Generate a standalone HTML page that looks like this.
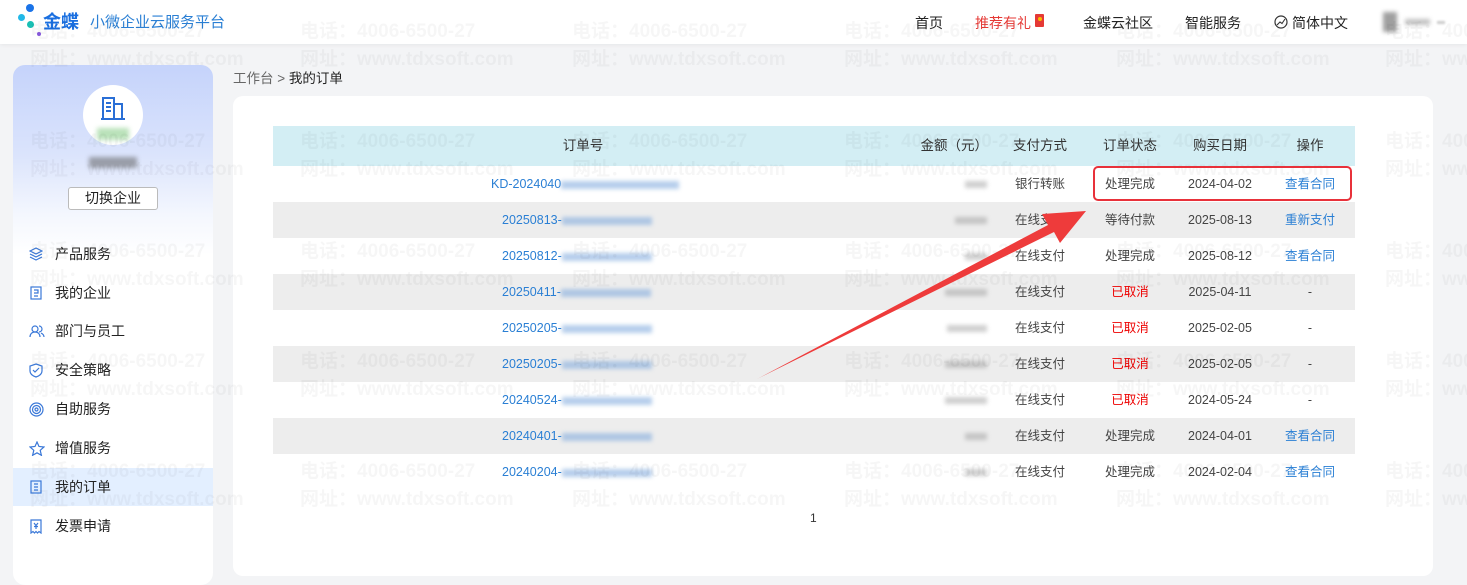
<!DOCTYPE html>
<html><head><meta charset="utf-8">
<style>
*{margin:0;padding:0;box-sizing:border-box}
body{width:1467px;height:566px;overflow:hidden;background:#f3f4f6;font-family:"Liberation Sans","Noto Sans CJK SC",sans-serif;font-size:13px;color:#333;position:relative}
.hdr{position:absolute;left:0;top:0;width:1467px;height:44px;background:#fff;box-shadow:0 1px 4px rgba(0,0,0,.06)}
.abs{position:absolute}
.side{position:absolute;left:13px;top:65px;width:200px;height:520px;border-radius:12px;background:linear-gradient(#c5d3fb 0,#dbe4fc 90px,#f4f7fe 150px,#fff 190px)}
.menu{position:absolute;left:0;width:200px;height:38px;line-height:38px;padding-left:42px;font-size:14px;color:#222}
.menu svg{position:absolute;left:16px;top:12px}
.main{position:absolute;left:233px;top:96px;width:1200px;height:480px;background:#fff;border-radius:10px}
.row{position:absolute;left:273px;width:1082px;height:36px;line-height:36px;font-size:12.5px;color:#444}
.g{background:#ededed}
.c{position:absolute;text-align:center}
.blue{color:#2a7fd4}.red{color:#e00}
.blur{display:inline-block;height:8px;background:#7aa6dc;filter:blur(2px);vertical-align:middle;opacity:.55}
.bg{display:inline-block;height:7px;background:#888;filter:blur(2px);vertical-align:middle;opacity:.4}
.wm{position:absolute;color:rgba(0,0,0,.035);font-weight:bold;font-size:19px;line-height:28px;white-space:nowrap;pointer-events:none;z-index:50}
</style></head><body>
<div class="hdr"></div>
<div class="abs" style="left:26px;top:4px;width:8px;height:8px;border-radius:50%;background:#1a73e8"></div>
<div class="abs" style="left:18px;top:14px;width:7px;height:7px;border-radius:50%;background:#22b8e8"></div>
<div class="abs" style="left:27px;top:21px;width:7px;height:7px;border-radius:50%;background:#19bfb4"></div>
<div class="abs" style="left:37px;top:32px;width:4px;height:4px;border-radius:50%;background:#8a5be0"></div>
<div class="abs" style="left:43px;top:8px;font-size:18px;font-weight:bold;color:#1a6fe0">金蝶</div>
<div class="abs" style="left:90px;top:11px;font-size:15px;color:#2a7fd4">小微企业云服务平台</div>
<div class="abs" style="left:915px;top:13px;font-size:14px;color:#222">首页</div>
<div class="abs" style="left:975px;top:13px;font-size:14px;color:#e53935">推荐有礼</div>
<div class="abs" style="left:1035px;top:14px;width:9px;height:13px;background:#e53935;border-radius:1px"><div style="width:4px;height:4px;background:#f5c000;border-radius:50%;margin:3px auto"></div></div>
<div class="abs" style="left:1083px;top:13px;font-size:14px;color:#222">金蝶云社区</div>
<div class="abs" style="left:1185px;top:13px;font-size:14px;color:#222">智能服务</div>
<svg class="abs" style="left:1274px;top:15px" width="14" height="14" viewBox="0 0 14 14"><circle cx="7" cy="7" r="6" fill="none" stroke="#333" stroke-width="1.2"/><path d="M3 10 L6 7 L8 8.5 L11 4" fill="none" stroke="#333" stroke-width="1.1"/></svg>
<div class="abs" style="left:1292px;top:13px;font-size:14px;color:#222">简体中文</div>
<div class="abs" style="left:1383px;top:12px;width:14px;height:20px;background:#777;filter:blur(2px);opacity:.7"></div>
<div class="abs" style="left:1405px;top:19px;width:25px;height:6px;background:#999;filter:blur(2px);opacity:.6"></div>
<div class="abs" style="left:1437px;top:21px;width:8px;height:3px;background:#aaa;filter:blur(1px);opacity:.6"></div>

<div class="side">
 <div class="abs" style="left:70px;top:20px;width:60px;height:60px;border-radius:50%;background:#fff"></div>
 <svg class="abs" style="left:87px;top:30px" width="26" height="26" viewBox="0 0 26 26"><path d="M3 24V3h11v21M14 9h8v15M1 24h24M6 8h5M6 12h5M6 16h5" fill="none" stroke="#2a6fd6" stroke-width="2"/></svg>
 <div class="abs" style="left:84px;top:63px;width:32px;height:12px;background:#8ccf8c;filter:blur(2.5px);opacity:.6"></div>
 <div class="abs" style="left:76px;top:92px;width:48px;height:11px;background:#555;filter:blur(2.5px);opacity:.5"></div>
 <div class="abs" style="left:55px;top:122px;width:90px;height:23px;border:1px solid #bbb;border-radius:3px;background:#fff;text-align:center;line-height:21px;font-size:14px;color:#222">切换企业</div>
 <div class="menu" style="top:170px"><svg width="14" height="14" viewBox="0 0 14 14" fill="none" stroke="#3a78d8" stroke-width="1.2"><path d="M7 1L13 4 7 7 1 4Z M1 7l6 3 6-3 M1 10l6 3 6-3"/></svg>产品服务</div>
 <div class="menu" style="top:209px"><svg width="14" height="14" viewBox="0 0 14 14" fill="none" stroke="#3a78d8" stroke-width="1.2"><rect x="2" y="1" width="10" height="12"/><path d="M5 4h4v3H5M5 10h4"/></svg>我的企业</div>
 <div class="menu" style="top:247px"><svg width="16" height="14" viewBox="0 0 16 14" fill="none" stroke="#3a78d8" stroke-width="1.2"><circle cx="6" cy="5" r="3"/><path d="M1 13c0-3 2-5 5-5s5 2 5 5M10 2a3 3 0 0 1 0 6M12 9c2 1 3 2 3 4"/></svg>部门与员工</div>
 <div class="menu" style="top:286px"><svg width="14" height="15" viewBox="0 0 14 15" fill="none" stroke="#3a78d8" stroke-width="1.2"><path d="M7 1L13 3v5c0 3-3 5-6 6C4 13 1 11 1 8V3Z M4 7l2 2 4-4"/></svg>安全策略</div>
 <div class="menu" style="top:325px"><svg width="15" height="15" viewBox="0 0 15 15" fill="none" stroke="#3a78d8" stroke-width="1.2"><circle cx="7.5" cy="7.5" r="6.5"/><circle cx="7.5" cy="7.5" r="4"/><circle cx="7.5" cy="7.5" r="1.5"/></svg>自助服务</div>
 <div class="menu" style="top:364px"><svg width="16" height="15" viewBox="0 0 16 15" fill="none" stroke="#3a78d8" stroke-width="1.2"><path d="M8 1l2 4.5 5 .5-3.8 3.3 1.2 5L8 11.8 3.6 14.3l1.2-5L1 6l5-.5Z"/></svg>增值服务</div>
 <div class="menu" style="top:403px;background:#e3efff"><svg width="14" height="14" viewBox="0 0 14 14" fill="none" stroke="#3a78d8" stroke-width="1.2"><rect x="2" y="1" width="10" height="12"/><path d="M5 4h4M5 7h4M5 10h4"/></svg>我的订单</div>
 <div class="menu" style="top:442px"><svg width="14" height="15" viewBox="0 0 14 15" fill="none" stroke="#3a78d8" stroke-width="1.2"><path d="M2 1h10v13l-2-1.5-1.5 1.5L7 12.5 5.5 14 4 12.5 2 14Z M5 4l2 2.5L9 4M7 6.5V10M5 7.5h4"/></svg>发票申请</div>
</div>

<div class="abs" style="left:233px;top:67px;font-size:13.5px;color:#666">工作台 &gt; <span style="color:#222">我的订单</span></div>
<div class="main"></div>

<div class="row" style="top:126px;height:40px;line-height:40px;background:#d3eef4;font-size:13.5px;color:#333">
 <div class="c" style="left:250px;width:120px">订单号</div>
 <div class="c" style="left:610px;width:105px;text-align:right">金额（元）</div>
 <div class="c" style="left:722px;width:90px">支付方式</div>
 <div class="c" style="left:812px;width:90px">订单状态</div>
 <div class="c" style="left:902px;width:90px">购买日期</div>
 <div class="c" style="left:992px;width:90px">操作</div>
</div>

<div class="row" style="top:166px"><div class="c blue" style="left:218px;width:300px;text-align:left">KD-2024040<span class="blur" style="width:118px"></span></div><div class="c" style="left:680px;width:34px;text-align:right"><span class="bg" style="width:22px"></span></div><div class="c" style="left:722px;width:90px">银行转账</div><div class="c" style="left:812px;width:90px">处理完成</div><div class="c" style="left:902px;width:90px">2024-04-02</div><div class="c blue" style="left:992px;width:90px">查看合同</div></div>
<div class="row g" style="top:202px"><div class="c blue" style="left:229px;width:300px;text-align:left">20250813-<span class="blur" style="width:90px"></span></div><div class="c" style="left:680px;width:34px;text-align:right"><span class="bg" style="width:32px"></span></div><div class="c" style="left:722px;width:90px">在线支付</div><div class="c" style="left:812px;width:90px">等待付款</div><div class="c" style="left:902px;width:90px">2025-08-13</div><div class="c blue" style="left:992px;width:90px">重新支付</div></div>
<div class="row" style="top:238px"><div class="c blue" style="left:229px;width:300px;text-align:left">20250812-<span class="blur" style="width:90px"></span></div><div class="c" style="left:680px;width:34px;text-align:right"><span class="bg" style="width:22px"></span></div><div class="c" style="left:722px;width:90px">在线支付</div><div class="c" style="left:812px;width:90px">处理完成</div><div class="c" style="left:902px;width:90px">2025-08-12</div><div class="c blue" style="left:992px;width:90px">查看合同</div></div>
<div class="row g" style="top:274px"><div class="c blue" style="left:229px;width:300px;text-align:left">20250411-<span class="blur" style="width:90px"></span></div><div class="c" style="left:670px;width:44px;text-align:right"><span class="bg" style="width:42px"></span></div><div class="c" style="left:722px;width:90px">在线支付</div><div class="c red" style="left:812px;width:90px">已取消</div><div class="c" style="left:902px;width:90px">2025-04-11</div><div class="c" style="left:992px;width:90px">-</div></div>
<div class="row" style="top:310px"><div class="c blue" style="left:229px;width:300px;text-align:left">20250205-<span class="blur" style="width:90px"></span></div><div class="c" style="left:670px;width:44px;text-align:right"><span class="bg" style="width:40px"></span></div><div class="c" style="left:722px;width:90px">在线支付</div><div class="c red" style="left:812px;width:90px">已取消</div><div class="c" style="left:902px;width:90px">2025-02-05</div><div class="c" style="left:992px;width:90px">-</div></div>
<div class="row g" style="top:346px"><div class="c blue" style="left:229px;width:300px;text-align:left">20250205-<span class="blur" style="width:90px"></span></div><div class="c" style="left:670px;width:44px;text-align:right"><span class="bg" style="width:42px"></span></div><div class="c" style="left:722px;width:90px">在线支付</div><div class="c red" style="left:812px;width:90px">已取消</div><div class="c" style="left:902px;width:90px">2025-02-05</div><div class="c" style="left:992px;width:90px">-</div></div>
<div class="row" style="top:382px"><div class="c blue" style="left:229px;width:300px;text-align:left">20240524-<span class="blur" style="width:90px"></span></div><div class="c" style="left:670px;width:44px;text-align:right"><span class="bg" style="width:42px"></span></div><div class="c" style="left:722px;width:90px">在线支付</div><div class="c red" style="left:812px;width:90px">已取消</div><div class="c" style="left:902px;width:90px">2024-05-24</div><div class="c" style="left:992px;width:90px">-</div></div>
<div class="row g" style="top:418px"><div class="c blue" style="left:229px;width:300px;text-align:left">20240401-<span class="blur" style="width:90px"></span></div><div class="c" style="left:680px;width:34px;text-align:right"><span class="bg" style="width:22px"></span></div><div class="c" style="left:722px;width:90px">在线支付</div><div class="c" style="left:812px;width:90px">处理完成</div><div class="c" style="left:902px;width:90px">2024-04-01</div><div class="c blue" style="left:992px;width:90px">查看合同</div></div>
<div class="row" style="top:454px"><div class="c blue" style="left:229px;width:300px;text-align:left">20240204-<span class="blur" style="width:90px"></span></div><div class="c" style="left:680px;width:34px;text-align:right"><span class="bg" style="width:22px"></span></div><div class="c" style="left:722px;width:90px">在线支付</div><div class="c" style="left:812px;width:90px">处理完成</div><div class="c" style="left:902px;width:90px">2024-02-04</div><div class="c blue" style="left:992px;width:90px">查看合同</div></div>

<div class="abs" style="left:810px;top:511px;font-size:12px;color:#333">1</div>

<div class="abs" style="left:1093px;top:166px;width:259px;height:35px;border:2.5px solid #e8313a;border-radius:5px;z-index:60"></div>
<svg class="abs" style="left:0;top:0;z-index:60" width="1467" height="566"><polygon points="757,379 1048,225 1042,214 1086,211 1060,243 1054,232" fill="#ee3b3b"/></svg>

<div class="wm" style="left:30px;top:18px">电话：4006-6500-27<br>网址：www.tdxsoft.com</div>
<div class="wm" style="left:300px;top:18px">电话：4006-6500-27<br>网址：www.tdxsoft.com</div>
<div class="wm" style="left:572px;top:18px">电话：4006-6500-27<br>网址：www.tdxsoft.com</div>
<div class="wm" style="left:844px;top:18px">电话：4006-6500-27<br>网址：www.tdxsoft.com</div>
<div class="wm" style="left:1116px;top:18px">电话：4006-6500-27<br>网址：www.tdxsoft.com</div>
<div class="wm" style="left:1385px;top:18px">电话：4006-6500-27<br>网址：www.tdxsoft.com</div>
<div class="wm" style="left:30px;top:128px">电话：4006-6500-27<br>网址：www.tdxsoft.com</div>
<div class="wm" style="left:300px;top:128px">电话：4006-6500-27<br>网址：www.tdxsoft.com</div>
<div class="wm" style="left:572px;top:128px">电话：4006-6500-27<br>网址：www.tdxsoft.com</div>
<div class="wm" style="left:844px;top:128px">电话：4006-6500-27<br>网址：www.tdxsoft.com</div>
<div class="wm" style="left:1116px;top:128px">电话：4006-6500-27<br>网址：www.tdxsoft.com</div>
<div class="wm" style="left:1385px;top:128px">电话：4006-6500-27<br>网址：www.tdxsoft.com</div>
<div class="wm" style="left:30px;top:238px">电话：4006-6500-27<br>网址：www.tdxsoft.com</div>
<div class="wm" style="left:300px;top:238px">电话：4006-6500-27<br>网址：www.tdxsoft.com</div>
<div class="wm" style="left:572px;top:238px">电话：4006-6500-27<br>网址：www.tdxsoft.com</div>
<div class="wm" style="left:844px;top:238px">电话：4006-6500-27<br>网址：www.tdxsoft.com</div>
<div class="wm" style="left:1116px;top:238px">电话：4006-6500-27<br>网址：www.tdxsoft.com</div>
<div class="wm" style="left:1385px;top:238px">电话：4006-6500-27<br>网址：www.tdxsoft.com</div>
<div class="wm" style="left:30px;top:348px">电话：4006-6500-27<br>网址：www.tdxsoft.com</div>
<div class="wm" style="left:300px;top:348px">电话：4006-6500-27<br>网址：www.tdxsoft.com</div>
<div class="wm" style="left:572px;top:348px">电话：4006-6500-27<br>网址：www.tdxsoft.com</div>
<div class="wm" style="left:844px;top:348px">电话：4006-6500-27<br>网址：www.tdxsoft.com</div>
<div class="wm" style="left:1116px;top:348px">电话：4006-6500-27<br>网址：www.tdxsoft.com</div>
<div class="wm" style="left:1385px;top:348px">电话：4006-6500-27<br>网址：www.tdxsoft.com</div>
<div class="wm" style="left:30px;top:458px">电话：4006-6500-27<br>网址：www.tdxsoft.com</div>
<div class="wm" style="left:300px;top:458px">电话：4006-6500-27<br>网址：www.tdxsoft.com</div>
<div class="wm" style="left:572px;top:458px">电话：4006-6500-27<br>网址：www.tdxsoft.com</div>
<div class="wm" style="left:844px;top:458px">电话：4006-6500-27<br>网址：www.tdxsoft.com</div>
<div class="wm" style="left:1116px;top:458px">电话：4006-6500-27<br>网址：www.tdxsoft.com</div>
<div class="wm" style="left:1385px;top:458px">电话：4006-6500-27<br>网址：www.tdxsoft.com</div>
</body></html>
